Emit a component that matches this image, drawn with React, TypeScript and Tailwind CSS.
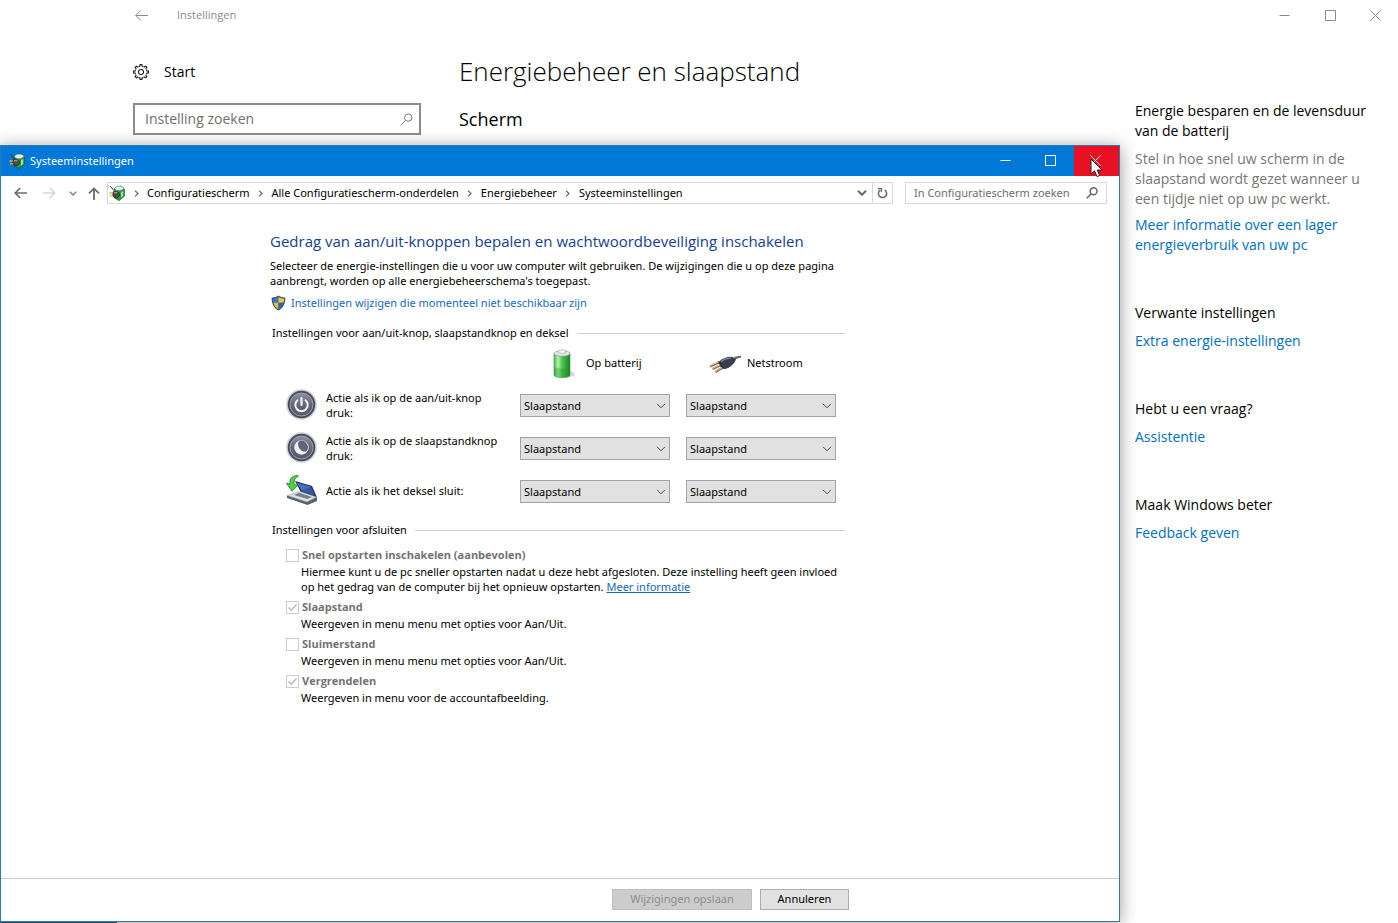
import React from "react";

const ACTIONS = ["Slaapstand", "Sluimerstand", "Afsluiten", "Niets doen"];

function MinimizeIcon() {
  return (
    <svg className="size-[11px]" viewBox="0 0 11 11" fill="none" stroke="currentColor" aria-hidden="true">
      <path d="M0.5 5.5h10" />
    </svg>
  );
}

function MaximizeIcon() {
  return (
    <svg className="size-[11px]" viewBox="0 0 11 11" fill="none" stroke="currentColor" aria-hidden="true">
      <path d="M0.5 0.5h10v10h-10z" />
    </svg>
  );
}

function CloseIcon() {
  return (
    <svg className="size-[11px]" viewBox="0 0 11 11" fill="none" stroke="currentColor" aria-hidden="true">
      <path d="M0.3 0.3l10.4 10.4M10.7 0.3L0.3 10.7" />
    </svg>
  );
}

function ThinBackIcon() {
  return (
    <svg className="h-[11px] w-[13px]" viewBox="0 0 13 11" fill="none" stroke="currentColor" aria-hidden="true">
      <path d="M0.8 5.5H13M5.8 0.5l-5 5 5 5" />
    </svg>
  );
}

function BackIcon() {
  return (
    <svg className="h-3 w-[13px]" viewBox="0 0 13 12" fill="none" stroke="currentColor" strokeWidth="1.7" aria-hidden="true">
      <path d="M1.2 6H13M6.2 1l-5 5 5 5" />
    </svg>
  );
}

function ForwardIcon() {
  return (
    <svg className="h-3 w-[13px]" viewBox="0 0 13 12" fill="none" stroke="currentColor" strokeWidth="1.5" aria-hidden="true">
      <path d="M0 6h11.8M6.8 1l5 5-5 5" />
    </svg>
  );
}

function UpIcon() {
  return (
    <svg className="h-[13px] w-3" viewBox="0 0 12 13" fill="none" stroke="currentColor" strokeWidth="1.8" aria-hidden="true">
      <path d="M6 1.2V13M1 6.4l5-5 5 5" />
    </svg>
  );
}

function ChevronDown({ className }: { className: string }) {
  return (
    <svg className={className} viewBox="0 0 10 6" fill="none" stroke="currentColor" aria-hidden="true">
      <path d="M1 0.8l4 4 4-4" />
    </svg>
  );
}

function CrumbArrow() {
  return (
    <svg className="h-[7px] w-[5px] shrink-0" viewBox="0 0 5 7" fill="none" stroke="#6b6b6b" strokeWidth="1.3" aria-hidden="true">
      <path d="M1 0.6l3 2.9-3 2.9" />
    </svg>
  );
}

function RefreshIcon() {
  return (
    <svg className="h-3 w-[11px]" viewBox="0 0 11 12" fill="none" stroke="#6b6b6b" strokeWidth="1.6" aria-hidden="true">
      <path d="M7.6 2.9A4.1 4.1 0 1 1 3 3.2" />
      <path d="M0.8 1.6h3.6v3.6" strokeWidth="1.4" />
    </svg>
  );
}

function SearchIcon({ className, weight }: { className: string; weight: number }) {
  return (
    <svg className={className} viewBox="0 0 13 13" fill="none" stroke="currentColor" strokeWidth={weight} aria-hidden="true">
      <circle cx="8.2" cy="4.6" r="3.7" />
      <path d="M5.5 7.4L0.8 12.2" />
    </svg>
  );
}

function GearIcon() {
  const teeth = [0, 45, 90, 135, 180, 225, 270, 315];
  return (
    <svg className="size-4" viewBox="0 0 16 16" fill="none" stroke="#222" strokeWidth="1.1" aria-hidden="true">
      {teeth.map((a) => (
        <path key={a} d="M5.9 2.4 L6.9 2.1 L7.1 0.6 H8.9 L9.1 2.1 L10.1 2.4" transform={`rotate(${a} 8 8)`} />
      ))}
      <circle cx="8" cy="8" r="2.5" />
    </svg>
  );
}

function PowerPlanIcon({ className }: { className: string }) {
  return (
    <svg className={className} viewBox="0 0 16 16" aria-hidden="true">
      <path d="M5.5 3.5L12 1l3.4 3v7.2L10 15.6 5.5 13z" fill="#2c9a4a" stroke="#19572c" strokeWidth="0.7" />
      <path d="M5.4 3.4C7 0.6 12.5 0 15 3.2 13 6.4 7.600 6.400 5.400 3.400z" fill="#e3f1e8" stroke="#5e7a68" strokeWidth="0.6" />
      <path d="M12 7l2.200-0.8v4.700l-2.200 1.8z" fill="#8fe69b" />
      <path d="M1.2 1.2l4 4.6" stroke="#3a3a3a" strokeWidth="1" />
      <path d="M4 6.8h4.600l2 1.500v2.200l-2.200 2.200H5.2L3.6 10.8z" fill="#4e4a40" stroke="#1f1d19" strokeWidth="0.6" />
      <path d="M5 7.800h3.400" stroke="#c8c2b2" strokeWidth="0.9" />
      <path d="M0.4 8h3.4M0.8 10.8h3.2" stroke="#d9b64a" strokeWidth="1.3" />
    </svg>
  );
}

function ShieldIcon() {
  return (
    <svg className="h-4 w-[15px]" viewBox="0 0 15 16" aria-hidden="true">
      <path d="M7.5 0.6C5.6 2 3.2 2.6 0.7 2.5c-.2 6 1.8 10.5 6.8 13 5-2.5 7-7 6.8-13C11.8 2.6 9.4 2 7.5 0.6z" fill="#4a5563" />
      <path d="M7.5 1.9C5.9 3 4 3.5 2 3.5c0 1.5.1 2.9.5 4.2h5z" fill="#2f7fd0" />
      <path d="M7.5 1.9c1.6 1.1 3.5 1.6 5.5 1.6 0 1.5-.1 2.9-.5 4.2h-5z" fill="#f6c640" />
      <path d="M2.500 7.700h5v6.500c-2.700-1.500-4.300-3.700-5-6.500z" fill="#f3bd35" />
      <path d="M12.500 7.700h-5v6.500c2.700-1.500 4.300-3.700 5-6.500z" fill="#2369b8" />
    </svg>
  );
}

function BatteryIcon() {
  return (
    <svg className="h-[30px] w-6 shrink-0" viewBox="0 0 24 30" aria-hidden="true">
      <defs>
        <linearGradient id="battery-body" x1="0" x2="1">
          <stop offset="0" stopColor="#45b84c" />
          <stop offset="0.25" stopColor="#b6f0ad" />
          <stop offset="0.5" stopColor="#4fc553" />
          <stop offset="1" stopColor="#168324" />
        </linearGradient>
      </defs>
      <ellipse cx="17" cy="25" rx="6" ry="3" fill="#d9d9d9" />
      <path d="M2 4.500v22c2 3 14 3 16 0v-22z" fill="url(#battery-body)" stroke="#3f9447" strokeWidth="0.600" />
      <path d="M2.200 18v8.200c2 2.700 13.600 2.700 15.600 0V18c-4 2-11 2-15.600 0z" fill="#18922a" opacity="0.350" />
      <ellipse cx="10" cy="4.500" rx="8" ry="2.800" fill="#dfe7df" stroke="#8b988c" strokeWidth="0.700" />
      <path d="M6.500 3.600V1.600c1-1 6-1 7 0v2c-1 1-6 1-7 0z" fill="#f4f4f4" stroke="#a0a0a0" strokeWidth="0.600" />
    </svg>
  );
}

function PlugIcon() {
  return (
    <svg className="h-[18px] w-8 shrink-0" viewBox="0 0 32 18" aria-hidden="true">
      <path d="M22 4.500c3-3 6-3.800 10-3.800v2c-3 0-5 1.200-8 4z" fill="#6b717f" />
      <path d="M10 6.500C14 3 18 1.600 23 1.800l4 2.600c-2 5-6 8-11 9.700l-3-.8z" fill="#3a3f4c" />
      <path d="M12 6.400c3.500-2.500 6.500-3.500 10-3.300" stroke="#858c9d" strokeWidth="1.300" fill="none" />
      <path d="M9 6.400l5 7.400" stroke="#22262e" strokeWidth="1.800" />
      <path d="M9.600 7.500L1 11.400M11.300 10.200L3.500 14M13.400 12.800L6.400 17" stroke="#8a6a45" strokeWidth="2.200" />
      <path d="M9.400 7.100L1 10.900M11 9.800L3.300 13.500M13 12.500L6.100 16.500" stroke="#ecd5a6" strokeWidth="0.900" />
    </svg>
  );
}

function RoundButton({ id, children }: { id: string; children: React.ReactNode }) {
  return (
    <svg className="size-8 shrink-0" viewBox="0 0 32 32" aria-hidden="true">
      <defs>
        <linearGradient id={id} x1="0" y1="0" x2="0" y2="1">
          <stop offset="0" stopColor="#8e8f9f" />
          <stop offset="0.5" stopColor="#666779" />
          <stop offset="1" stopColor="#555668" />
        </linearGradient>
      </defs>
      <circle cx="15.500" cy="15.500" r="15.300" fill="#cfcfd8" />
      <circle cx="15.500" cy="15.500" r="13.700" fill="#4a4b5c" />
      <circle cx="15.500" cy="15.500" r="11.500" fill={`url(#${id})`} stroke="#a0a1b0" strokeWidth="1" />
      {children}
    </svg>
  );
}

function PowerButtonIcon() {
  return (
    <RoundButton id="power-face">
      <path d="M11.500 11.200a6.200 6.200 0 1 0 8 0" fill="none" stroke="#f2f2f6" strokeWidth="2" strokeLinecap="round" />
      <path d="M15.500 9v7" stroke="#f2f2f6" strokeWidth="2.200" strokeLinecap="round" />
    </RoundButton>
  );
}

function SleepButtonIcon() {
  return (
    <RoundButton id="sleep-face">
      <circle cx="15.500" cy="15.500" r="7.200" fill="#f0f0f4" />
      <ellipse cx="17" cy="14" rx="4.400" ry="6" transform="rotate(-35 17 14)" fill="#62637a" />
    </RoundButton>
  );
}

function LidIcon() {
  return (
    <svg className="size-8 shrink-0" viewBox="0 0 32 32" aria-hidden="true">
      <path d="M9 6l17 5 5 11.500-16-5z" fill="#20294a" />
      <path d="M10.500 7.400l14.500 4.400 4 8.800-13-4z" fill="#3458a8" />
      <path d="M10.500 7.400l14.500 4.400-9 3.800z" fill="#6f92d8" opacity="0.400" />
      <path d="M14 17L31 22.500v3.400l-9.500 4L1 22.900v-2z" fill="#5b606c" />
      <path d="M14 16.500L30.500 22l-9.500 5L1 20.500z" fill="#dcdfe4" stroke="#8f949e" strokeWidth="0.500" />
      <path d="M13 17.800l13 4.200-4.500 2L8 19.900z" fill="#777d89" />
      <path d="M11.500 0.500C6 0.500 3.200 4 4 9l-3.500-.7L6 16l6-5.700-3.800-.6C7.800 5.500 9 2.500 12.500 1.100z" fill="#4fd044" stroke="#218a24" strokeWidth="0.900" />
    </svg>
  );
}

function CursorIcon() {
  return (
    <svg className="pointer-events-none absolute top-3 left-4 h-5 w-[13px]" viewBox="0 0 13 20" aria-hidden="true">
      <path d="M1 1v15l3.500-3.200L7 18.600l2.600-1.100L7.200 12H12z" fill="#fff" stroke="#222" strokeWidth="1" />
    </svg>
  );
}

function GroupHeading({ children }: { children: React.ReactNode }) {
  return (
    <h2 className="flex items-center gap-2 pl-0.5 leading-4">
      {children}
      <span className="h-px flex-1 bg-[#cfcfcf]" />
    </h2>
  );
}

function ActionSelect({ label }: { label: string }) {
  return (
    <span className="relative mt-0.5 block h-[23px]">
      <select
        aria-label={label}
        defaultValue="Slaapstand"
        className="h-full w-full appearance-none border border-[#a3a3a3] bg-[#e1e1e1] px-[3px] text-[11px] leading-4 text-black"
      >
        {ACTIONS.map((a) => (
          <option key={a}>{a}</option>
        ))}
      </select>
      <ChevronDown className="pointer-events-none absolute top-[9px] right-1 h-[6px] w-[10px] text-[#444]" />
    </span>
  );
}

function ActionRow({ icon, text }: { icon: React.ReactNode; text: string }) {
  return (
    <div className="grid h-[43px] grid-cols-[218px_150px_150px] items-center gap-x-4">
      <div className="flex items-center gap-2">
        {icon}
        <span className="w-[180px] leading-[15px]">{text}</span>
      </div>
      <ActionSelect label={`${text} Op batterij`} />
      <ActionSelect label={`${text} Netstroom`} />
    </div>
  );
}

function ShutdownOption({
  id,
  label,
  checked,
  children,
}: {
  id: string;
  label: string;
  checked: boolean;
  children: React.ReactNode;
}) {
  return (
    <div className="pb-1">
      <div className="flex h-[18px] items-center gap-[3px]">
        <span className="relative size-[13px]">
          <input
            id={id}
            type="checkbox"
            disabled
            defaultChecked={checked}
            className="block size-[13px] appearance-none border border-[#cccccc] bg-white"
          />
          {checked && (
            <svg
              className="pointer-events-none absolute inset-0 size-[13px]"
              viewBox="0 0 13 13"
              fill="none"
              stroke="#b9b9b9"
              strokeWidth="1.4"
              aria-hidden="true"
            >
              <path d="M2.500 6.500l2.800 2.800 5.200-5.800" />
            </svg>
          )}
        </span>
        <label htmlFor={id} className="font-['Open_Sans',sans-serif] font-bold text-[#737373]">
          {label}
        </label>
      </div>
      <p className="pl-[15px] leading-[15px]">{children}</p>
    </div>
  );
}

function SideGroup({ title, link }: { title: string; link: string }) {
  return (
    <section className="flex flex-col gap-2">
      <h2>{title}</h2>
      <a href="#" className="text-[#0070c0]">
        {link}
      </a>
    </section>
  );
}

function SettingsWindow() {
  return (
    <div className="flex min-h-screen flex-col pl-[117px]">
      <header className="flex h-[30px] items-center text-[#8a8a8a]">
        <button aria-label="Terug" className="grid h-full w-12 place-items-center">
          <ThinBackIcon />
        </button>
        <span className="flex-1 pl-3 text-[11px]">Instellingen</span>
        <button aria-label="Minimaliseren" className="grid h-full w-[46px] place-items-center">
          <MinimizeIcon />
        </button>
        <button aria-label="Maximaliseren" className="grid h-full w-[46px] place-items-center">
          <MaximizeIcon />
        </button>
        <button aria-label="Sluiten" className="grid h-full w-[45px] place-items-center">
          <CloseIcon />
        </button>
      </header>
      <div className="flex flex-1 pl-4">
        <nav className="w-72 shrink-0 pt-8 text-sm">
          <a href="#" className="flex h-5 items-center gap-[15px]">
            <GearIcon />
            Start
          </a>
          <div className="mt-[21px] flex h-8 items-center border-2 border-[#8c8c8c] pr-1.5 pl-2.5 text-[#777]">
            <input
              type="text"
              aria-label="Instelling zoeken"
              placeholder="Instelling zoeken"
              className="min-w-0 flex-1 bg-transparent outline-none placeholder:text-[#6f6f6f]"
            />
            <SearchIcon className="size-[13px]" weight={1} />
          </div>
        </nav>
        <main className="min-w-0 flex-1 pt-[19px] pl-[38px]">
          <h1 className="text-[26px] leading-[44px] font-light">Energiebeheer en slaapstand</h1>
          <h2 className="pt-[13px] text-lg leading-[26px]">Scherm</h2>
        </main>
        <aside className="flex w-[263px] shrink-0 flex-col gap-12 pt-[71px] pr-6 text-sm leading-5">
          <section className="flex flex-col">
            <h2>
              Energie besparen en de levensduur
              <br />
              van de batterij
            </h2>
            <p className="pt-2 text-[#767676]">
              Stel in hoe snel uw scherm in de
              <br />
              slaapstand wordt gezet wanneer u
              <br />
              een tijdje niet op uw pc werkt.
            </p>
            <a href="#" className="pt-1.5 text-[#0070c0]">
              Meer informatie over een lager
              <br />
              energieverbruik van uw pc
            </a>
          </section>
          <SideGroup title="Verwante instellingen" link="Extra energie-instellingen" />
          <SideGroup title="Hebt u een vraag?" link="Assistentie" />
          <SideGroup title="Maak Windows beter" link="Feedback geven" />
        </aside>
      </div>
    </div>
  );
}

function SystemSettingsDialog() {
  const crumbs = ["Configuratiescherm", "Alle Configuratiescherm-onderdelen", "Energiebeheer", "Systeeminstellingen"];
  return (
    <section
      aria-label="Systeeminstellingen"
      className="absolute top-[145px] right-[278px] bottom-px left-0 flex flex-col border border-[#2a7ab0] bg-white font-['Noto_Sans','Open_Sans',sans-serif] text-[11px] shadow-[0_2px_16px_rgba(0,0,0,0.4)]"
    >
      <header className="flex h-[30px] shrink-0 items-center bg-[#0078d7] pl-2 text-white">
        <PowerPlanIcon className="size-4" />
        <span className="flex-1 pl-[5px]">Systeeminstellingen</span>
        <button aria-label="Minimaliseren" className="grid h-full w-[45px] place-items-center pr-0.5 pb-0.5">
          <MinimizeIcon />
        </button>
        <button aria-label="Maximaliseren" className="grid h-full w-[45px] place-items-center pr-0.5 pb-0.5">
          <MaximizeIcon />
        </button>
        <button aria-label="Sluiten" className="relative grid h-full w-[45px] place-items-center bg-[#e81123] pr-0.5 pb-0.5">
          <CloseIcon />
          <CursorIcon />
        </button>
      </header>

      <div className="flex h-[34px] shrink-0 items-center pr-3 pl-3 text-[#6b6b6b]">
        <button aria-label="Terug" className="pr-4 pl-px">
          <BackIcon />
        </button>
        <button aria-label="Vooruit" disabled className="pr-[13px] text-[#d6d6d6]">
          <ForwardIcon />
        </button>
        <button aria-label="Recente locaties" className="pr-[11px] text-[#8a8a8a]">
          <ChevronDown className="h-[5px] w-2 stroke-2" />
        </button>
        <button aria-label="Omhoog" className="pr-[7px]">
          <UpIcon />
        </button>
        <nav aria-label="Adres" className="flex h-[22px] flex-1 items-center border border-[#d9d9d9] text-black">
          <PowerPlanIcon className="ml-px size-4" />
          <ol className="flex flex-1 items-center">
            {crumbs.map((c) => (
              <li key={c} className="flex items-center">
                <span className="grid w-[22px] place-items-center">
                  <CrumbArrow />
                </span>
                <a href="#">{c}</a>
              </li>
            ))}
          </ol>
          <button aria-label="Vorige locaties" className="grid h-full w-5 place-items-center text-[#6b6b6b]">
            <ChevronDown className="h-[6px] w-[10px] stroke-2" />
          </button>
          <button aria-label="Vernieuwen" className="grid h-full w-5 place-items-center border-l border-[#d9d9d9]">
            <RefreshIcon />
          </button>
        </nav>
        <div className="ml-3 flex h-[22px] w-[202px] items-center border border-[#d9d9d9] pr-2 pl-2">
          <input
            type="text"
            aria-label="In Configuratiescherm zoeken"
            placeholder="In Configuratiescherm zoeken"
            className="min-w-0 flex-1 bg-transparent outline-none placeholder:text-[#6d6d6d]"
          />
          <SearchIcon className="size-3 text-[#6b6b6b]" weight={1.7} />
        </div>
      </div>

      <main className="min-h-0 flex-1 pt-[21px] pl-[269px]">
        <div className="w-[575px]">
          <h1 className="font-['Open_Sans',sans-serif] text-[15px] leading-5 text-[#14418f]">
            Gedrag van aan/uit-knoppen bepalen en wachtwoordbeveiliging inschakelen
          </h1>
          <p className="pt-[7px] leading-[15px] whitespace-nowrap">
            Selecteer de energie-instellingen die u voor uw computer wilt gebruiken. De wijzigingen die u op deze pagina
            <br />
            aanbrengt, worden op alle energiebeheerschema's toegepast.
          </p>
          <a href="#" className="mt-[7px] flex h-4 items-center gap-[5px] pl-px text-[#1569bd]">
            <ShieldIcon />
            Instellingen wijzigen die momenteel niet beschikbaar zijn
          </a>

          <section className="pt-[14px]">
            <GroupHeading>Instellingen voor aan/uit-knop, slaapstandknop en deksel</GroupHeading>
            <div className="flex h-[42px] items-center pt-[3px] pl-[282px]">
              <div className="flex w-[157px] items-center gap-2.5">
                <BatteryIcon />
                Op batterij
              </div>
              <div className="flex items-center gap-1.5">
                <PlugIcon />
                Netstroom
              </div>
            </div>
            <div className="pl-4">
              <ActionRow icon={<PowerButtonIcon />} text="Actie als ik op de aan/uit-knop druk:" />
              <ActionRow icon={<SleepButtonIcon />} text="Actie als ik op de slaapstandknop druk:" />
              <ActionRow icon={<LidIcon />} text="Actie als ik het deksel sluit:" />
            </div>
          </section>

          <section className="pt-2.5">
            <GroupHeading>Instellingen voor afsluiten</GroupHeading>
            <div className="pt-2 pl-4">
              <ShutdownOption id="fast-start" label="Snel opstarten inschakelen (aanbevolen)" checked={false}>
                <span className="whitespace-nowrap">
                  Hiermee kunt u de pc sneller opstarten nadat u deze hebt afgesloten. Deze instelling heeft geen invloed
                </span>
                <br />
                op het gedrag van de computer bij het opnieuw opstarten.{" "}
                <a href="#" className="text-[#1569bd] underline">
                  Meer informatie
                </a>
              </ShutdownOption>
              <ShutdownOption id="sleep" label="Slaapstand" checked>
                Weergeven in menu menu met opties voor Aan/Uit.
              </ShutdownOption>
              <ShutdownOption id="hibernate" label="Sluimerstand" checked={false}>
                Weergeven in menu menu met opties voor Aan/Uit.
              </ShutdownOption>
              <ShutdownOption id="lock" label="Vergrendelen" checked>
                Weergeven in menu voor de accountafbeelding.
              </ShutdownOption>
            </div>
          </section>
        </div>
      </main>

      <footer className="flex h-[43px] shrink-0 items-center gap-2 border-t border-[#cccccc] pb-0.5 pl-[611px]">
        <button disabled className="h-[21px] w-[140px] border border-[#bfbfbf] bg-[#cccccc] text-[#8d8d8d]">
          Wijzigingen opslaan
        </button>
        <button className="h-[21px] w-[89px] border border-[#adadad] bg-[#e1e1e1]">Annuleren</button>
      </footer>
    </section>
  );
}

export default function App() {
  return (
    <div className="relative min-h-screen overflow-hidden bg-white font-['Open_Sans','Noto_Sans',sans-serif] text-black">
      <SettingsWindow />
      <SystemSettingsDialog />
      <div className="absolute bottom-0 left-0 h-px w-[117px] bg-[#2b4a5e]" />
    </div>
  );
}
